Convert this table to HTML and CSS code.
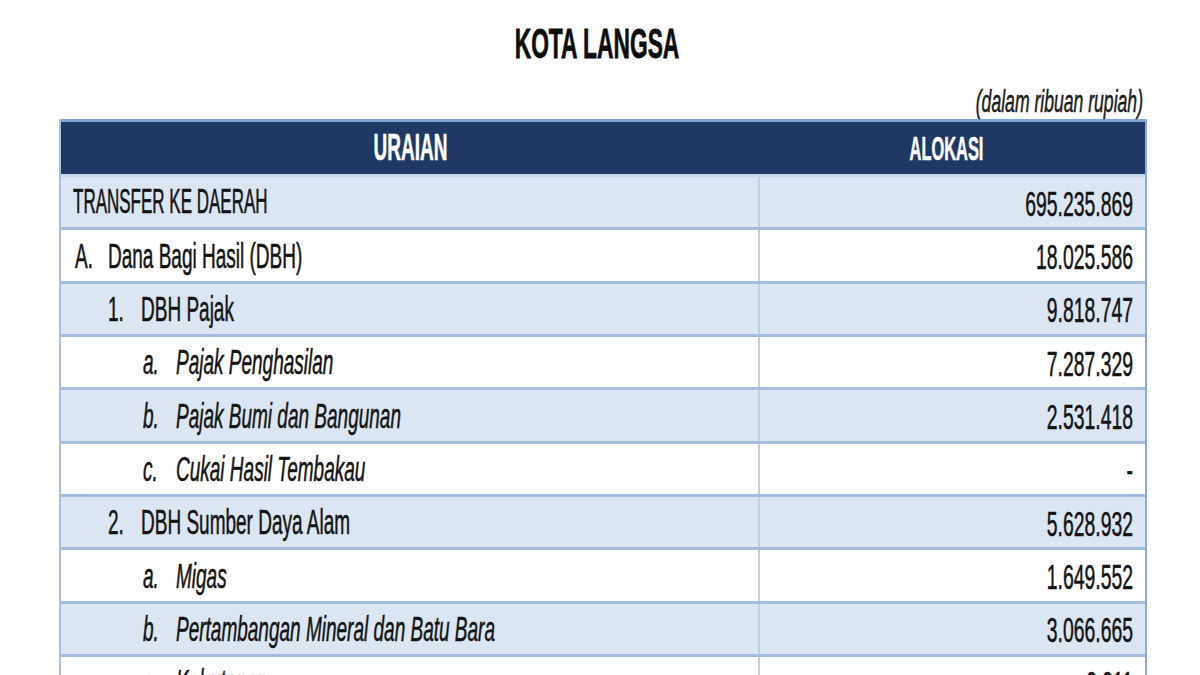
FILE: index.html
```html
<!DOCTYPE html>
<html lang="id">
<head>
<meta charset="utf-8">
<title>Kota Langsa</title>
<link rel="stylesheet" href="styles.css">
</head>
<body>
<div class="page">
  <div class="title"><span class="t">KOTA LANGSA</span></div>
  <div class="subtitle"><span class="t">(dalam ribuan rupiah)</span></div>
  <div class="table">
    <div class="row head">
      <div class="cell c1"><span class="t">URAIAN</span></div>
      <div class="cell c2"><span class="t">ALOKASI</span></div>
    </div>
    <div class="row shade">
      <div class="cell c1 lv0"><span class="t caps">TRANSFER KE DAERAH</span></div>
      <div class="cell c2"><span class="t">695.235.869</span></div>
    </div>
    <div class="row">
      <div class="cell c1 lv1"><span class="lbl"><span class="t">A.</span></span><span class="t">Dana Bagi Hasil (DBH)</span></div>
      <div class="cell c2"><span class="t">18.025.586</span></div>
    </div>
    <div class="row shade">
      <div class="cell c1 lv2"><span class="lbl"><span class="t">1.</span></span><span class="t">DBH Pajak</span></div>
      <div class="cell c2"><span class="t">9.818.747</span></div>
    </div>
    <div class="row">
      <div class="cell c1 lv3 it"><span class="lbl"><span class="t">a.</span></span><span class="t">Pajak Penghasilan</span></div>
      <div class="cell c2"><span class="t">7.287.329</span></div>
    </div>
    <div class="row shade">
      <div class="cell c1 lv3 it"><span class="lbl"><span class="t">b.</span></span><span class="t">Pajak Bumi dan Bangunan</span></div>
      <div class="cell c2"><span class="t">2.531.418</span></div>
    </div>
    <div class="row">
      <div class="cell c1 lv3 it"><span class="lbl"><span class="t">c.</span></span><span class="t">Cukai Hasil Tembakau</span></div>
      <div class="cell c2"><span class="t">-</span></div>
    </div>
    <div class="row shade">
      <div class="cell c1 lv2"><span class="lbl"><span class="t">2.</span></span><span class="t">DBH Sumber Daya Alam</span></div>
      <div class="cell c2"><span class="t">5.628.932</span></div>
    </div>
    <div class="row">
      <div class="cell c1 lv3 it"><span class="lbl"><span class="t">a.</span></span><span class="t">Migas</span></div>
      <div class="cell c2"><span class="t">1.649.552</span></div>
    </div>
    <div class="row shade">
      <div class="cell c1 lv3 it"><span class="lbl"><span class="t">b.</span></span><span class="t">Pertambangan Mineral dan Batu Bara</span></div>
      <div class="cell c2"><span class="t">3.066.665</span></div>
    </div>
    <div class="row">
      <div class="cell c1 lv3 it"><span class="lbl"><span class="t">c.</span></span><span class="t">Kehutanan</span></div>
      <div class="cell c2"><span class="t">2.211</span></div>
    </div>
  </div>
</div>
</body>
</html>
```
FILE: styles.css
```css
html, body {
  margin: 0;
  padding: 0;
  overflow: hidden;
  background: #ffffff;
}

body {
  font-family: "Liberation Sans", Arial, sans-serif;
  color: #141414;
  width: 1200px;
  height: 675px;
}

.page {
  padding: 0 53px 0 59px;
}

.t {
  display: inline-block;
  transform: scaleY(1.85);
  white-space: nowrap;
  -webkit-text-stroke: 0.3px currentColor;
}

.title {
  height: 86px;
  display: flex;
  align-items: center;
  justify-content: center;
  font-weight: bold;
  font-size: 22.8px;
  color: #0d0d0d;
  padding-right: 12px;
  padding-top: 1px;
  box-sizing: border-box;
}

.title .t {
  transform: scaleY(1.9);
  -webkit-text-stroke: 0.4px currentColor;
}

.subtitle {
  height: 33px;
  display: flex;
  align-items: center;
  justify-content: flex-end;
  padding-right: 4px;
  font-style: italic;
  font-size: 17.6px;
  color: #1a1a1a;
}

.subtitle .t {
  transform: scaleY(1.75);
}

.table {
  width: 1088px;
  border-left: 2px solid #a9bfdc;
  border-right: 2px solid #8eaadb;
  box-sizing: border-box;
}

.row {
  display: grid;
  grid-template-columns: 699px 1fr;
  height: 53.35px;
  border-top: 3px solid #a4bddf;
  box-sizing: border-box;
  background: #ffffff;
}

.row.shade {
  background: #dce6f2;
}

.row.head {
  height: 57px;
  border-top: 3px solid #7fa6d8;
  border-bottom: 2px solid #c5d5ea;
  background: #1f3864;
  color: #ffffff;
  font-weight: bold;
  font-size: 17.5px;
}

.row.head .t {
  transform: scaleY(1.92);
}

.row.head .c2 {
  font-size: 16.4px;
}

.row.head .c2 .t {
  transform: scaleY(2.05);
}

.row.head + .row {
  border-top: 1px solid #c9d6e8;
  height: 51.35px;
}

.row.head .cell {
  justify-content: center;
  border-right: none;
  padding-top: 0;
}

.row.head .c1 {
  padding-left: 0;
}

.cell {
  display: flex;
  align-items: center;
  font-size: 19px;
  padding-top: 2px;
  box-sizing: border-box;
}

.c1 {
  border-right: 2px solid #c3cfdf;
}

.c2 {
  justify-content: flex-end;
  padding-right: 12px;
  font-size: 19.4px;
}

.lv0 { padding-left: 12px; }
.lv1 { padding-left: 14px; }
.lv2 { padding-left: 47px; }
.lv3 { padding-left: 82px; }

.t.caps {
  font-size: 17px;
  transform: scaleY(2.05);
}

.lbl {
  display: inline-block;
  width: 33px;
  flex: none;
}

.it {
  font-style: italic;
}
```
